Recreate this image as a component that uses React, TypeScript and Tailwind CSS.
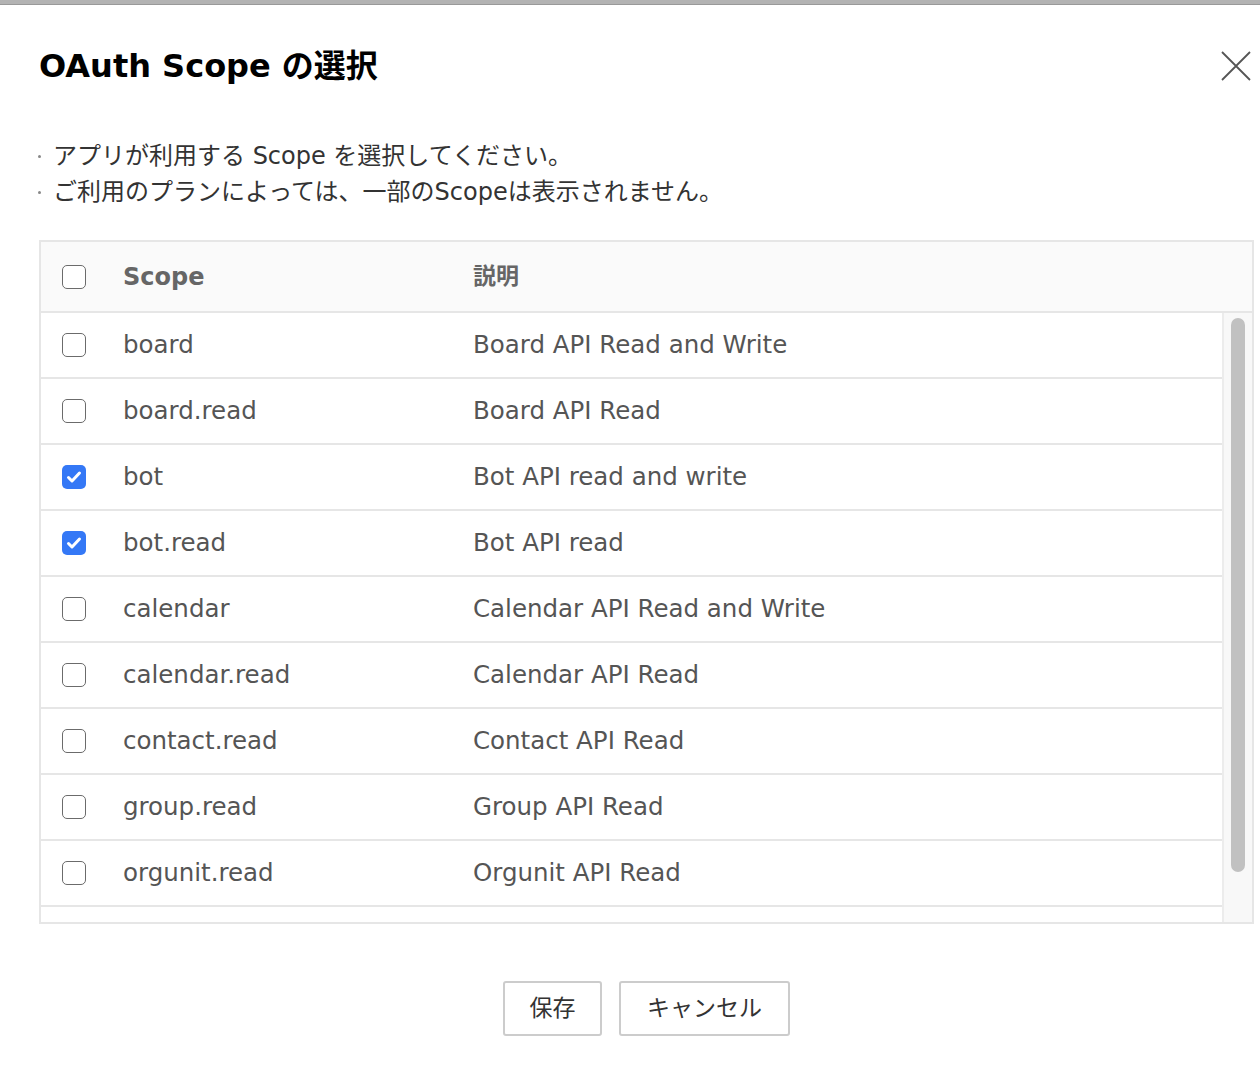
import React from "react";

const scopes = [
  { name: "board", desc: "Board API Read and Write", checked: false },
  { name: "board.read", desc: "Board API Read", checked: false },
  { name: "bot", desc: "Bot API read and write", checked: true },
  { name: "bot.read", desc: "Bot API read", checked: true },
  { name: "calendar", desc: "Calendar API Read and Write", checked: false },
  { name: "calendar.read", desc: "Calendar API Read", checked: false },
  { name: "contact.read", desc: "Contact API Read", checked: false },
  { name: "group.read", desc: "Group API Read", checked: false },
  { name: "orgunit.read", desc: "Orgunit API Read", checked: false },
];

function Checkbox({ checked }: { checked: boolean }) {
  if (checked) {
    return (
      <span className="flex h-6 w-6 items-center justify-center rounded-[5px] bg-[#3478f6]">
        <svg width="18" height="18" viewBox="0 0 18 18" fill="none">
          <path d="M3.5 9.5l3.5 3.5L14.5 5" stroke="#fff" strokeWidth="3" strokeLinecap="round" strokeLinejoin="round" />
        </svg>
      </span>
    );
  }
  return <span className="block h-6 w-6 rounded-[5px] border-[1.5px] border-[#6b6b6b] bg-white" />;
}

export default function App() {
  const [items, setItems] = React.useState(scopes);

  const toggle = (i: number) => {
    setItems(items.map((s, j) => (j === i ? { ...s, checked: !s.checked } : s)));
  };

  return (
    <div className="min-h-screen bg-white font-['DejaVu_Sans','Noto_Sans_CJK_JP',sans-serif] text-[#333]">
      <div className="h-[5px] border-b border-[#999] bg-[#b3b3b3]" />

      <div className="flex items-start justify-between pl-[39px] pr-[4px] pt-[37px]">
        <h1 className="text-[32px] font-bold leading-[48px] text-black">OAuth Scope の選択</h1>
        <button className="mt-[4px] p-1">
          <svg width="32" height="32" viewBox="0 0 32 32" fill="none">
            <path d="M2 2l28 28M30 2L2 30" stroke="#555" strokeWidth="1.8" />
          </svg>
        </button>
      </div>

      <ul className="mt-[48px] pl-[38px] text-[24px] leading-[36px] text-[#333]">
        <li className="flex items-center">
          <span className="mr-[12px] h-[3px] w-[3px] rounded-full bg-[#888]" />
          アプリが利用する Scope を選択してください。
        </li>
        <li className="flex items-center">
          <span className="mr-[12px] h-[3px] w-[3px] rounded-full bg-[#888]" />
          ご利用のプランによっては、一部のScopeは表示されません。
        </li>
      </ul>

      <div className="ml-[39px] mt-[30px] w-[1215px]">
        <div className="border-2 border-[#e6e6e6]">
          <div className="flex h-[71px] items-center border-b-2 border-[#e6e6e6] bg-[#fafafa] text-[#666]">
            <div className="w-[82px] pl-[21px]">
              <Checkbox checked={false} />
            </div>
            <div className="w-[350px] text-[24px] font-bold">Scope</div>
            <div className="text-[23px] font-bold">説明</div>
          </div>

          <div className="flex h-[609px]">
            <div className="flex-1">
              {items.map((s, i) => (
                <div
                  key={s.name}
                  onClick={() => toggle(i)}
                  className="flex h-[66px] cursor-pointer items-center border-b-2 border-[#e6e6e6] text-[24.5px] text-[#555]"
                >
                  <div className="w-[82px] pl-[21px]">
                    <Checkbox checked={s.checked} />
                  </div>
                  <div className="w-[350px]">{s.name}</div>
                  <div>{s.desc}</div>
                </div>
              ))}
            </div>
            <div className="w-[30px] border-l-2 border-[#ececec] bg-[#f8f8f8] px-[7px] pt-[5px]">
              <div className="h-[554px] rounded-full bg-[#c1c1c1]" />
            </div>
          </div>
        </div>

        <div className="mt-[57px] flex justify-center gap-[17px]">
          <button className="h-[55px] w-[99px] rounded-[3px] border-2 border-[#cccccc] bg-white text-[23px] text-[#333]">
            保存
          </button>
          <button className="h-[55px] w-[171px] rounded-[3px] border-2 border-[#cccccc] bg-white text-[23px] text-[#333]">
            キャンセル
          </button>
        </div>
      </div>
    </div>
  );
}
